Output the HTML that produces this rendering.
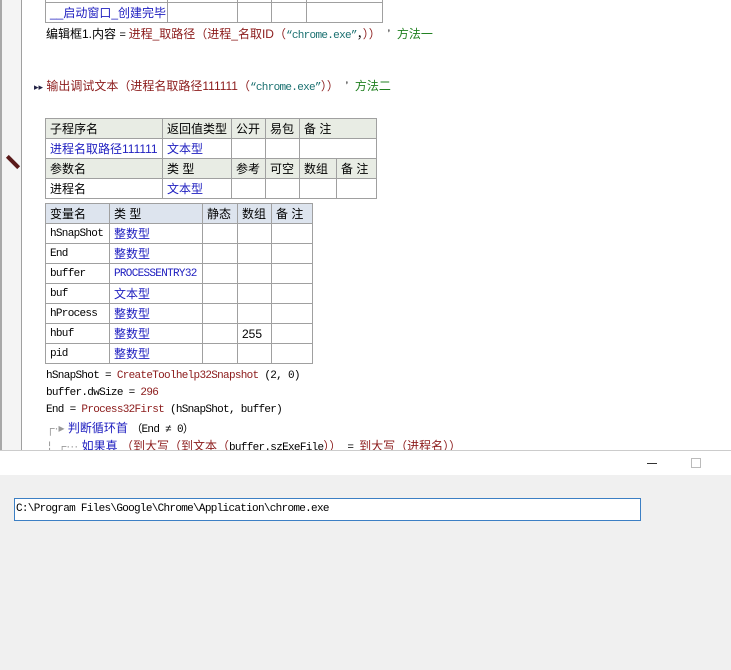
<!DOCTYPE html>
<html><head><meta charset="utf-8"><style>
*{margin:0;padding:0;box-sizing:border-box}
body{width:731px;height:670px;position:relative;overflow:hidden;background:#f0f0f0;font-family:"Liberation Sans","Noto Sans CJK SC",sans-serif;font-size:12px}
.top{position:absolute;left:0;top:0;width:731px;height:450px;background:#fff;overflow:hidden}
.gut{position:absolute;left:0;top:0;width:22px;height:450px;background:#f4f4f4;border-left:2px solid #a8a8a8;border-right:1px solid #a0a0a0}
.a{position:absolute;white-space:nowrap;line-height:16px}
table{position:absolute;border-collapse:collapse;table-layout:fixed}
td{border:1px solid #a0a0a0;height:20px;padding:0 4px;white-space:nowrap;overflow:hidden;font-size:12px;line-height:18px}
.h td{background:#e8ece4}
.hv td{background:#dde4ee}
.b{color:#2020c0}
.m{font-family:"Liberation Mono","Noto Sans CJK SC",monospace;font-size:11px;letter-spacing:-0.7px}
.r{color:#8b1a1a}.g{color:#208020}.t{color:#1a7070}
.bar{position:absolute;left:0;top:450px;width:731px;height:25px;background:#fff;border-top:1px solid #ccc}
</style></head><body>
<div class="top">
<div class="gut"></div>
<table style="left:45px;top:-18px;width:338px"><colgroup><col style="width:122px"><col style="width:70px"><col style="width:34px"><col style="width:35px"><col></colgroup><tr><td></td><td></td><td></td><td></td><td></td></tr>
<tr><td class="b">__启动窗口_创建完毕</td><td></td><td></td><td></td><td></td></tr></table>
<div class="a" style="left:46px;top:26px">编辑框1.内容 <span class="m">=</span> <span class="r">进程_取路径（进程_名取ID（</span><span class="t m">“chrome.exe”</span>，<span class="r">））</span>&nbsp;&nbsp;’&nbsp;&nbsp;<span class="g">方法一</span></div>
<div class="a" style="left:34px;top:78px"><span style="color:#224;font-size:9px">▸▸</span> <span class="r">输出调试文本（进程名取路径111111（</span><span class="t m">“chrome.exe”</span><span class="r">））</span>&nbsp;&nbsp;’&nbsp;&nbsp;<span class="g">方法二</span></div>
<div class="a" style="left:5px;top:160px;width:16px;height:4px;background:#5a1a1a;transform:rotate(45deg)"></div>
<table style="left:45px;top:118px;width:332px">
<colgroup><col style="width:117px"><col style="width:69px"><col style="width:34px"><col style="width:34px"><col style="width:37px"><col></colgroup>
<tr class="h"><td>子程序名</td><td>返回值类型</td><td>公开</td><td>易包</td><td colspan="2">备 注</td></tr>
<tr><td class="b">进程名取路径111111</td><td class="b">文本型</td><td></td><td></td><td colspan="2"></td></tr>
<tr class="h"><td>参数名</td><td>类 型</td><td>参考</td><td>可空</td><td>数组</td><td>备 注</td></tr>
<tr><td>进程名</td><td class="b">文本型</td><td></td><td></td><td></td><td></td></tr>
</table>
<table style="left:45px;top:203px;width:268px">
<colgroup><col style="width:64px"><col style="width:93px"><col style="width:35px"><col style="width:34px"><col></colgroup>
<tr class="hv"><td>变量名</td><td>类 型</td><td>静态</td><td>数组</td><td>备 注</td></tr>
<tr><td class="m">hSnapShot</td><td class="b">整数型</td><td></td><td></td><td></td></tr>
<tr><td class="m">End</td><td class="b">整数型</td><td></td><td></td><td></td></tr>
<tr><td class="m">buffer</td><td class="b m">PROCESSENTRY32</td><td></td><td></td><td></td></tr>
<tr><td class="m">buf</td><td class="b">文本型</td><td></td><td></td><td></td></tr>
<tr><td class="m">hProcess</td><td class="b">整数型</td><td></td><td></td><td></td></tr>
<tr><td class="m">hbuf</td><td class="b">整数型</td><td></td><td>255</td><td></td></tr>
<tr><td class="m">pid</td><td class="b">整数型</td><td></td><td></td><td></td></tr>
</table>
<div class="a m" style="left:46px;top:368px">hSnapShot = <span class="r">CreateToolhelp32Snapshot</span> (2, 0)</div>
<div class="a m" style="left:46px;top:385px">buffer.dwSize = <span class="r">296</span></div>
<div class="a m" style="left:46px;top:402px">End = <span class="r">Process32First</span> (hSnapShot, buffer)</div>
<div class="a" style="left:46px;top:420px"><span style="color:#999">┌·▸</span> <span class="b">判断循环首</span> <span class="m">（End ≠ 0）</span></div>
<div class="a" style="left:48px;top:438px"><span style="color:#999">¦&nbsp;&nbsp;┌···</span> <span class="b">如果真</span> <span class="r">（到大写（到文本（</span><span class="m">buffer.szExeFile</span><span class="r">））</span><span class="m"> = </span><span class="r">到大写（进程名））</span></div>
</div>
<div class="bar"><div class="a" style="left:647px;top:12px;width:10px;height:1px;background:#333"></div><div class="a" style="left:691px;top:7px;width:10px;height:10px;border:1px solid #bbb"></div></div>
<div class="a m" style="left:14px;top:498px;width:627px;height:23px;background:#fff;border:1px solid #3c7fc4;padding:3px 1px;line-height:15px">C:\Program Files\Google\Chrome\Application\chrome.exe</div>
</body></html>
